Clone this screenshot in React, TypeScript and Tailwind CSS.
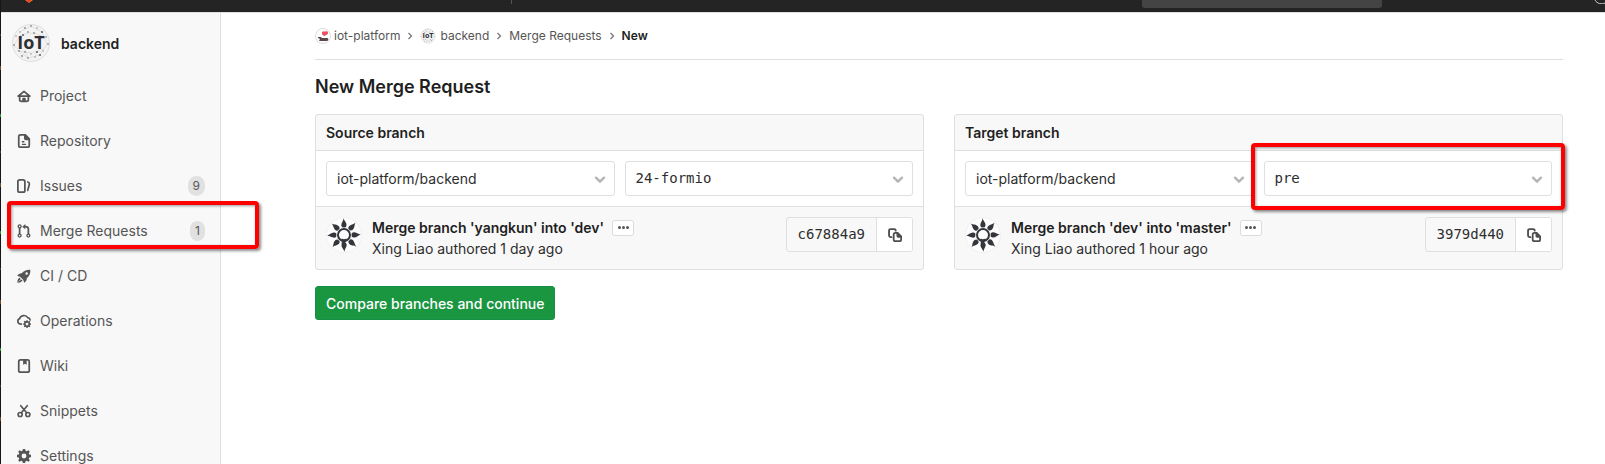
import React from "react";

const SANS = "font-['Inter','Liberation_Sans',sans-serif]";
const MONO = "font-['DejaVu_Sans_Mono','Liberation_Mono',monospace]";

type IconProps = { className?: string };

function Icon({ children, className = "size-[14px]" }: IconProps & { children: React.ReactNode }) {
  return (
    <svg viewBox="0 0 16 16" className={`shrink-0 ${className}`} fill="currentColor" aria-hidden="true">
      {children}
    </svg>
  );
}

const HomeIcon = () => (
  <Icon>
    <path
      fillRule="evenodd"
      d="M8.6 1.9 16 8l-1 1.2h-1V12a3 3 0 0 1-3 3H5a3 3 0 0 1-3-3V9.200H1L0 8l7.400-6.100a1 1 0 0 1 1.200 0ZM8 4 4.300 7.100h7.400L8 4ZM4 9.100V12a1 1 0 0 0 1 1h1v-2a1 1 0 0 1 1-1h2a1 1 0 0 1 1 1v2h1a1 1 0 0 0 1-1V9.100H4Z"
    />
  </Icon>
);

const DocIcon = () => (
  <Icon>
    <path
      fillRule="evenodd"
      d="M4 0h6l5 5v8a3 3 0 0 1-3 3H4a3 3 0 0 1-3-3V3a3 3 0 0 1 3-3Zm0 2a1 1 0 0 0-1 1v10a1 1 0 0 0 1 1h8a1 1 0 0 0 1-1V7h-3a2 2 0 0 1-2-2V2H4Zm2 6h2a.9.9 0 0 1 0 1.700H6A.9.9 0 0 1 6 8Zm0 3h4a.9.9 0 0 1 0 1.700H6A.9.9 0 0 1 6 11Z"
    />
  </Icon>
);

const IssuesIcon = () => (
  <Icon>
    <path
      fillRule="evenodd"
      d="M3 0h4a3 3 0 0 1 3 3v10a3 3 0 0 1-3 3H3a3 3 0 0 1-3-3V3a3 3 0 0 1 3-3Zm0 2a1 1 0 0 0-1 1v10a1 1 0 0 0 1 1h4a1 1 0 0 0 1-1V3a1 1 0 0 0-1-1H3Z"
    />
    <path d="M11.500 2.200c2.800.7 4 2 3.500 4.300l-1.600 6.200c-.4 1.200-1 1.600-1.900 1.600v-2.100l1.600-6.300c.2-.9-.4-1.500-1.600-1.800V2.200Z" />
  </Icon>
);

const MergeIcon = () => (
  <Icon>
    <g fill="none" stroke="currentColor" strokeWidth="1.500">
      <circle cx="3" cy="2.800" r="1.700" />
      <circle cx="3" cy="13.200" r="1.700" />
      <circle cx="13" cy="13.200" r="1.700" />
      <path strokeWidth="2" d="M3 4.500v7M13 11.500V6a3 3 0 0 0-3-3H8.500" />
    </g>
    <path d="M9.500 0v6L6 3Z" />
  </Icon>
);

const RocketIcon = () => (
  <Icon>
    <path
      fillRule="evenodd"
      d="M15.200.8c.4 4.200-1 7.200-4 9.800.1 2-.8 3.900-3 5.200l-1-3.300-3.700-3.700L.2 7.800C1.500 5.600 3.400 4.700 5.400 4.800c2.600-3 5.600-4.400 9.800-4ZM11 3.700a1.400 1.400 0 1 0 0 2.800 1.400 1.400 0 0 0 0-2.800Z"
    />
    <path d="m2.600 9.700 3.700 3.700c-.7 1.400-2.400 2.400-5.800 2.300-.1-3.200.6-5 2.100-6Z" />
    <path stroke="#f8f8f8" strokeWidth=".8" d="m2 14.200 3.200-3.200M.3 12l2-2M4 15.800l2-2" />
  </Icon>
);

const GEAR =
  "M6.700 0h2.600l.5 2.100 1.300.5L13 1.400 14.700 3l-1.200 1.900.5 1.300 2.100.5v2.600l-2.100.5-.5 1.300 1.200 1.900-1.700 1.700-1.900-1.200-1.300.5-.5 2.100H6.700l-.5-2.100-1.300-.5L3 14.700 1.300 13l1.200-1.900L2 9.800l-2-.5V6.700l2-.5.5-1.300L1.300 3 3 1.300l1.900 1.200L6.200 2 6.700 0ZM8 5.200a2.800 2.800 0 1 0 0 5.600 2.800 2.800 0 0 0 0-5.600Z";

const GearIcon = () => (
  <Icon>
    <path fillRule="evenodd" d={GEAR} />
  </Icon>
);

const CloudGearIcon = () => (
  <Icon>
    <path
      fill="none"
      stroke="currentColor"
      strokeWidth="1.900"
      strokeLinecap="round"
      d="M5 11.500H4A3.200 3.200 0 0 1 3 5.300 5 4.600 0 0 1 12.300 4.200 3 3 0 0 1 15 6.800"
    />
    <path fillRule="evenodd" transform="translate(7 7) scale(.56)" d={GEAR} />
  </Icon>
);

const BookIcon = () => (
  <Icon>
    <path
      fillRule="evenodd"
      d="M4 0h8a3 3 0 0 1 3 3v10a3 3 0 0 1-3 3H4a3 3 0 0 1-3-3V3a3 3 0 0 1 3-3Zm0 2a1 1 0 0 0-1 1v10a1 1 0 0 0 1 1h8a1 1 0 0 0 1-1V3a1 1 0 0 0-1-1h-1v4.500L9 5.300 7 6.500V2H4Z"
    />
  </Icon>
);

const ScissorsIcon = () => (
  <Icon>
    <g fill="none" stroke="currentColor" strokeWidth="1.900" strokeLinecap="round">
      <circle cx="3.600" cy="12" r="2.300" />
      <circle cx="12.400" cy="12" r="2.300" />
      <path d="m4.300 2 6.700 8M11.700 2 5 10" />
    </g>
  </Icon>
);

const CopyIcon = () => (
  <Icon>
    <path
      fill="none"
      stroke="currentColor"
      strokeWidth="2.100"
      strokeLinecap="round"
      d="M4 10.500H3A1.800 1.800 0 0 1 1.200 8.700V3A1.800 1.800 0 0 1 3 1.200h4A1.800 1.800 0 0 1 8.800 3"
    />
    <path
      fillRule="evenodd"
      d="M8.500 4.500h3L16 9v4a3 3 0 0 1-3 3H8.500a3 3 0 0 1-3-3V7.500a3 3 0 0 1 3-3Zm0 2.200a1 1 0 0 0-1 1V13a1 1 0 0 0 1 1H13a1 1 0 0 0 1-1v-2h-2.500a1.800 1.800 0 0 1-1.800-1.800V6.700H8.500Z"
    />
  </Icon>
);

function Chevron({ className }: IconProps) {
  return (
    <svg viewBox="0 0 12 8" className={className} fill="none" stroke="currentColor" strokeWidth="2.400" strokeLinecap="round" strokeLinejoin="round" aria-hidden="true">
      <path d="m2 1.700 4 4 4-4" />
    </svg>
  );
}

const Separator = () => (
  <svg viewBox="0 0 8 8" className="mx-[6px] size-2 shrink-0" fill="none" stroke="#777" strokeWidth="1.300" aria-hidden="true">
    <path d="m2.500 1 3 3-3 3" />
  </svg>
);

const DOTS = [
  [14, 5], [20, 3], [26, 5], [31, 9], [9, 9], [17, 9], [23, 10], [35, 14], [5, 13], [12, 12], [29, 13],
  [3, 22], [8, 28], [14, 29], [20, 31], [26, 29], [32, 28], [37, 21], [11, 33], [17, 35], [24, 34], [29, 32],
];

function IotLogo({ className }: IconProps) {
  return (
    <svg viewBox="0 0 40 40" className={`shrink-0 ${className}`} aria-hidden="true">
      <circle cx="20" cy="20" r="18.500" fill="#f3f3f3" stroke="#dedede" strokeWidth="1" />
      <path d="m9 9 11-6 11 6 5 12-7 11-12 3-9-7-5-6 6-9 8-3 9 1 6 3M8 28l12 2 12-4M14 27l3 8M26 28l-2 6" fill="none" stroke="#d3d3d3" strokeWidth=".6" />
      {DOTS.map(([x, y], i) => (
        <circle key={i} cx={x} cy={y} r={i % 3 === 0 ? 1.1 : 0.8} fill={i % 2 ? "#666" : "#999"} />
      ))}
      <text x="20" y="26" textAnchor="middle" fontSize="18" fontWeight="700" fill="#2d2f34" fontFamily="Open Sans, sans-serif">
        IoT
      </text>
    </svg>
  );
}

function GroupLogo() {
  return (
    <svg viewBox="0 0 16 16" className="size-4 shrink-0" aria-hidden="true">
      <circle cx="8" cy="8" r="7.500" fill="#fff" stroke="#dcdcdc" />
      <path d="M7 4.200c1-1.400 2.200-1 2.800-.5 1.200-.8 3.200-.5 3.300 1 .1 1.700-2 2.300-3.800 3.300C8 7.400 6.400 6.200 7 4.200Z" fill="#ee4f66" />
      <path d="M3 9h3l1 1h5.500l1 1-1 2H4l1-2-2-1Z" fill="#5b4a4c" />
    </svg>
  );
}

function SunAvatar() {
  return (
    <svg viewBox="0 0 36 36" className="size-9 shrink-0" aria-hidden="true">
      <circle cx="18" cy="18" r="17.500" fill="#fdfdfd" stroke="#f0f0f0" />
      {[0, 45, 90, 135, 180, 225, 270, 315].map((a) => (
        <path
          key={a}
          d="M17.500 1.200c.6 2.600 3.300 4.200 3 7-.2 1.700-1.200 2.600-2.500 2.600s-2.600-1-2.700-2.600C15.200 5.800 17.400 4 17.500 1.200Z"
          transform={`rotate(${a} 18 18)`}
          fill="#34363b"
        />
      ))}
      <circle cx="18" cy="18" r="7.600" fill="#fdfdfd" />
      <circle cx="18" cy="18" r="6" fill="none" stroke="#34363b" strokeWidth="2" />
      <path d="M15.800 27v-5.500c1.200 1 3 .8 4.700 0l-1.500 5.500Z" fill="#34363b" />
    </svg>
  );
}

function Highlight({ className }: { className: string }) {
  return (
    <span
      aria-hidden="true"
      className={`pointer-events-none absolute z-10 rounded-[4px] border-4 border-[#fe0000] shadow-[2px_2px_3px_rgba(0,0,0,0.45),inset_1px_1px_3px_rgba(0,0,0,0.4)] ${className}`}
    />
  );
}

const NAV = [
  { label: "Project", icon: HomeIcon },
  { label: "Repository", icon: DocIcon },
  { label: "Issues", icon: IssuesIcon, count: 9 },
  { label: "Merge Requests", icon: MergeIcon, count: 1, marked: true },
  { label: "CI / CD", icon: RocketIcon },
  { label: "Operations", icon: CloudGearIcon },
  { label: "Wiki", icon: BookIcon },
  { label: "Snippets", icon: ScissorsIcon },
  { label: "Settings", icon: GearIcon },
];

function Sidebar() {
  return (
    <aside className="flex w-[220px] shrink-0 flex-col border-r border-[#dfdfdf] bg-[#f8f8f8]">
      <a href="#project" className="flex h-[60px] shrink-0 items-center gap-[10px] pl-[10px] text-[14px] font-semibold text-[#1f1f1f]">
        <IotLogo className="size-10" />
        backend
      </a>
      <nav aria-label="Project">
        <ul>
          {NAV.map(({ label, icon: ItemIcon, count, marked }) => (
            <li key={label} className="relative">
              <a href="#nav" className="flex h-[45px] items-center gap-[9px] pl-4 pr-[15px] text-[14px] text-[#555]">
                <ItemIcon />
                <span className="grow">{label}</span>
                {count !== undefined && (
                  <span className="rounded-full bg-[#e1e1e1] px-[5px] text-[12px] leading-5">{count}</span>
                )}
              </a>
              {marked && <Highlight className="-right-[39px] bottom-[4px] left-[6px] -top-[7px]" />}
            </li>
          ))}
        </ul>
      </nav>
    </aside>
  );
}

function Select({ label, value, mono, marked }: { label: string; value: string; mono?: boolean; marked?: boolean }) {
  return (
    <div className="relative flex-1">
      <select
        aria-label={label}
        className={`block h-[35px] w-full appearance-none rounded-[3px] border border-[#dfdfdf] bg-white px-[10px] text-[14px] text-[#2e2e2e] ${mono ? MONO : ""}`}
      >
        <option>{value}</option>
      </select>
      <Chevron className="pointer-events-none absolute right-[9px] top-[15px] h-2 w-3 text-[#b5b5b5]" />
      {marked && <Highlight className="-inset-x-[13px] -bottom-[14px] -top-[18px]" />}
    </div>
  );
}

type BranchProps = { title: string; branch: string; message: string; meta: string; sha: string; marked?: boolean };

function BranchCard({ title, branch, message, meta, sha, marked }: BranchProps) {
  return (
    <section className="flex-1 rounded-[3px] border border-[#dfdfdf] bg-[#f8f8f8]">
      <h2 className="px-[10px] py-2 text-[14px] leading-[19px] font-semibold text-[#1f1f1f]">{title}</h2>
      <div className="flex gap-[10px] border-y border-[#dfdfdf] bg-white p-[10px]">
        <Select label={`${title} project`} value="iot-platform/backend" />
        <Select label={title} value={branch} mono marked={marked} />
      </div>
      <div className="flex items-start px-[10px] pt-[10px] pb-[10px]">
        <SunAvatar />
        <div className="ml-[10px] grow text-[14px] leading-[21px] text-[#2e2e2e]">
          <div className="flex items-center gap-2">
            <a href="#commit" className="font-semibold text-[#1f1f1f]">{message}</a>
            <button type="button" aria-label="Toggle commit description" className="flex h-4 w-[22px] items-center justify-center gap-px rounded-[3px] border border-[#dcdcdc] bg-white">
              <span className="size-[3px] rounded-full bg-[#555]" />
              <span className="size-[3px] rounded-full bg-[#555]" />
              <span className="size-[3px] rounded-full bg-[#555]" />
            </button>
          </div>
          <p>{meta}</p>
        </div>
        <div className="flex h-[35px] shrink-0 rounded-[3px] border border-[#dfdfdf]">
          <span className={`px-[11px] text-[14px] leading-[33px] text-[#2e2e2e] ${MONO}`}>{sha}</span>
          <button type="button" aria-label="Copy commit SHA" className="flex w-9 items-center justify-center rounded-r-[2px] border-l border-[#dfdfdf] bg-white text-[#4d4d4d]">
            <CopyIcon />
          </button>
        </div>
      </div>
    </section>
  );
}

export default function App() {
  return (
    <div className={`flex h-screen overflow-hidden bg-white ${SANS}`}>
      <div className="w-px shrink-0 bg-[repeating-linear-gradient(#161616_0_34px,#3c3c3c_34px_36px,#161616_36px_66px,#6b4a30_66px_70px,#161616_70px_114px,#1fa01f_114px_117px)]" />
      <div className="flex min-w-0 grow flex-col">
        <header className="flex h-3 shrink-0 items-start bg-[#242424]">
          <svg viewBox="0 0 8 3" className="ml-6 h-[3px] w-2" aria-hidden="true">
            <path d="M0 0h8L4 3Z" fill="#fc6d26" />
            <path d="M2 0h4L4 3Z" fill="#e24329" />
          </svg>
          <span className="ml-[478px] h-1 w-px bg-[#555]" />
          <span className="ml-auto mr-[212px] h-2 w-[240px] rounded-b-[3px] bg-[#444]" />
          <svg viewBox="0 0 11 4" className="h-1 w-[11px]" fill="none" stroke="#ccc" aria-hidden="true">
            <path d="M1 0c2 4 7 4.500 10 3" />
          </svg>
        </header>
        <div className="flex min-h-0 grow border-t border-[#dfdfdf]">
          <Sidebar />
          <main className="min-w-0 grow pl-[94px] pr-[42px]">
            <nav aria-label="Breadcrumb" className="flex h-[47px] items-center border-b border-[#dfdfdf] text-[12px] text-[#555]">
              <a href="#group" className="flex items-center gap-[3px]">
                <GroupLogo />
                iot-platform
              </a>
              <Separator />
              <a href="#project" className="flex items-center gap-1">
                <IotLogo className="size-4" />
                backend
              </a>
              <Separator />
              <a href="#merge-requests">Merge Requests</a>
              <Separator />
              <a href="#new" className="font-semibold text-[#1f1f1f]">New</a>
            </nav>
            <h1 className="pt-[14px] pb-[15px] text-[18px] leading-[25px] font-semibold text-[#1f1f1f]">New Merge Request</h1>
            <form onSubmit={(e) => e.preventDefault()}>
              <div className="flex gap-[30px]">
                <BranchCard title="Source branch" branch="24-formio" message="Merge branch 'yangkun' into 'dev'" meta="Xing Liao authored 1 day ago" sha="c67884a9" />
                <BranchCard title="Target branch" branch="pre" message="Merge branch 'dev' into 'master'" meta="Xing Liao authored 1 hour ago" sha="3979d440" marked />
              </div>
              <button type="submit" className="mt-4 h-[34px] rounded-[3px] border border-[#168f48] bg-[#1a9641] px-[10px] text-[14px] font-medium text-white">
                Compare branches and continue
              </button>
            </form>
          </main>
        </div>
      </div>
    </div>
  );
}
